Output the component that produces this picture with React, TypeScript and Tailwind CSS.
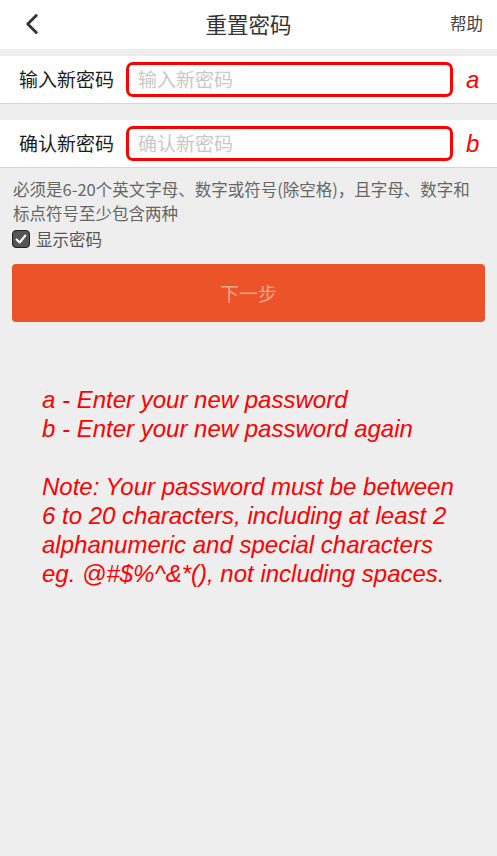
import { ChevronLeft } from "lucide-react";

const CN = { fontFamily: '"Noto Sans CJK SC", "Noto Sans", sans-serif' };
const EN = { fontFamily: '"Liberation Sans", Arial, sans-serif' };

function PasswordRow({ label, tag }: { label: string; tag: string }) {
  return (
    <div className="flex h-[48px] items-center border-b border-[#d6d6d6] bg-white">
      <span className="ml-[19px] w-[107px] text-[19px] text-[#1c1c1c]">{label}</span>
      <div className="flex h-[35px] w-[327px] items-center rounded-[7px] border-[3px] border-[#ff0000] bg-white pl-[9px]">
        <span className="text-[19px] text-[#c8c8c8]">{label}</span>
      </div>
      <span className="ml-[13px] text-[24px] italic text-[#ff0000]" style={EN}>
        {tag}
      </span>
    </div>
  );
}

export default function App() {
  return (
    <div className="flex h-[856px] w-[497px] flex-col bg-[#eeeeee]" style={CN}>
      <header className="relative flex h-[49px] items-center justify-center bg-white">
        <ChevronLeft className="absolute left-[15px] top-[7px] h-[34px] w-[34px] text-[#333]" strokeWidth={2} />
        <h1 className="text-[21.5px] text-[#333]">重置密码</h1>
        <span className="absolute right-[14px] top-[11px] text-[16.5px] text-[#444]">帮助</span>
      </header>

      <div className="mt-[7px]">
        <PasswordRow label="输入新密码" tag="a" />
      </div>
      <div className="mt-[16px]">
        <PasswordRow label="确认新密码" tag="b" />
      </div>

      <p className="mx-[13px] mt-[9px] text-[16.5px] leading-[24px] text-[#666]">
        必须是6-20个英文字母、数字或符号(除空格)，且字母、数字和标点符号至少包含两种
      </p>

      <label className="ml-[12px] mt-[2px] flex items-center gap-[6px]">
        <span className="flex h-[18px] w-[18px] items-center justify-center rounded-[4px] border border-[#222] bg-[#555]">
          <svg viewBox="0 0 16 16" className="h-[14px] w-[14px]">
            <path d="M3 8.5 L6.5 12 L13 4" fill="none" stroke="white" strokeWidth="2.4" strokeLinecap="round" strokeLinejoin="round" />
          </svg>
        </span>
        <span className="text-[16.5px] text-[#555]">显示密码</span>
      </label>

      <button className="mx-[12px] mt-[12px] flex h-[58px] items-center justify-center rounded-[4px] bg-[#eb5429] text-[19px] text-[#f5a68c]">
        下一步
      </button>

      <div className="ml-[42px] mt-[63px] text-[24px] italic leading-[29px] text-[#ff0000]" style={EN}>
        <p>a - Enter your new password</p>
        <p>b - Enter your new password again</p>
        <p className="mt-[29px]">Note: Your password must be between</p>
        <p>6 to 20 characters, including at least 2</p>
        <p>alphanumeric and special characters</p>
        <p>eg. @#$%^&amp;*(), not including spaces.</p>
      </div>
    </div>
  );
}
